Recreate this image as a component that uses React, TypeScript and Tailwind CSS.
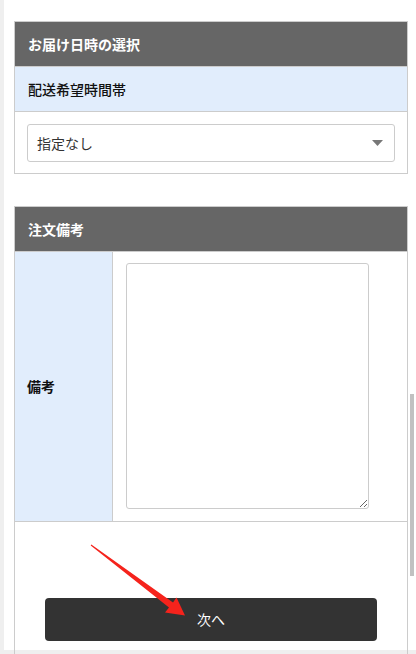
const font = { fontFamily: '"Noto Sans CJK JP", "Noto Sans", sans-serif' };

const SectionHeader = ({ title }: { title: string }) => (
  <div className="h-[44px] bg-[#666666] px-[13px] flex items-center text-white text-[14px] font-bold">
    {title}
  </div>
);

export default function App() {
  return (
    <div className="relative w-[416px] h-[654px] bg-[#efefef] overflow-hidden text-[#222]" style={font}>
      <div className="ml-[4px] h-[650px] bg-white pl-[10px] pr-[8px] pt-[21px]">
        {/* お届け日時 */}
        <div className="w-[394px] border border-[#cccccc]">
          <SectionHeader title="お届け日時の選択" />
          <div className="h-[46px] bg-[#e1edfc] border-t border-b border-[#cccccc] px-[13px] flex items-center text-[14px] font-medium text-[#111]">
            配送希望時間帯
          </div>
          <div className="pt-[12px] pb-[11px] px-[12px]">
            <div className="h-[38px] border border-[#cccccc] rounded-[3px] flex items-center justify-between pl-[9px] pr-[11px]">
              <span className="text-[14px] text-[#333]">指定なし</span>
              <svg width="11" height="6" viewBox="0 0 11 6">
                <path d="M0 0h11L5.5 6z" fill="#777" />
              </svg>
            </div>
          </div>
        </div>

        {/* 注文備考 */}
        <div className="mt-[32px] w-[394px] border-l border-r border-t border-[#cccccc] h-[460px]">
          <SectionHeader title="注文備考" />
          <div className="flex border-t border-b border-[#cccccc] h-[271px]">
            <div className="w-[98px] bg-[#e1edfc] border-r border-[#cccccc] px-[12px] flex items-center text-[14px] font-bold text-[#111]">
              備考
            </div>
            <div className="pt-[11px] pl-[13px]">
              <textarea className="block w-[243px] h-[246px] border border-[#cccccc] rounded-[3px] bg-white outline-none" />
            </div>
          </div>
          <div className="pt-[76px] px-[30px]">
            <button className="w-full h-[43px] bg-[#333333] rounded-[4px] text-white text-[14px] flex items-center justify-center">
              次へ
            </button>
          </div>
        </div>
      </div>

      {/* scrollbar */}
      <div className="absolute left-[410px] top-[394px] w-[4px] h-[182px] bg-[#c1c1c1]" />

      {/* red arrow annotation */}
      <svg className="absolute left-0 top-0 pointer-events-none" width="416" height="654" viewBox="0 0 416 654">
        <polygon
          points="91.3,544.4 173,602.5 176.5,597.5 185,615.5 165,612.5 169,607.5 90.7,545.6"
          fill="#f5231c"
        />
      </svg>
    </div>
  );
}
